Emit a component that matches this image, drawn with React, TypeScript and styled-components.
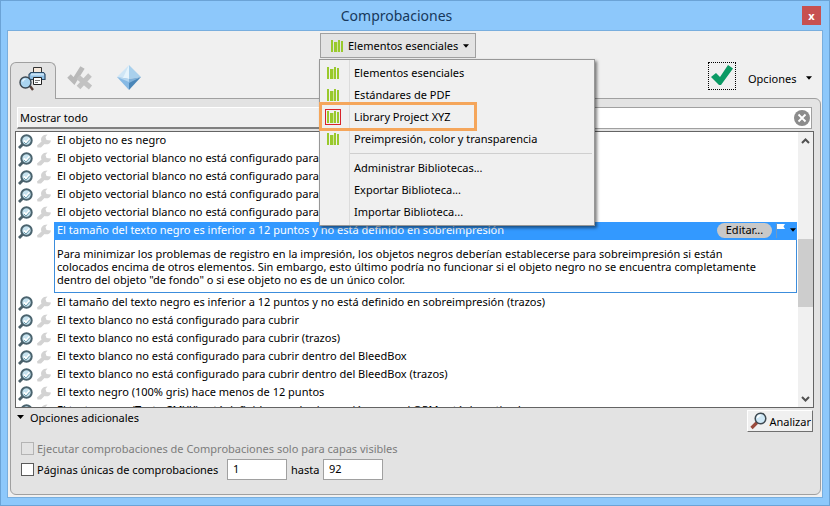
import React from "react";
import styled, { createGlobalStyle, css } from "styled-components";

const GlobalStyle = createGlobalStyle`
  *, *::before, *::after { box-sizing: border-box; }
  html, body { margin: 0; height: 100%; }
  body, button, input, select {
    font-family: "Noto Sans", "Open Sans", "Segoe UI", sans-serif;
    font-size: 11px;
    color: #000;
  }
  svg { flex: none; }
`;

const Window = styled.div`
  display: flex;
  flex-direction: column;
  height: 100vh;
  padding: 0 6px 7px;
  background: #8dc8fb;
  border: 1px solid #6ba3d6;
`;

const TitleBar = styled.header`
  display: flex;
  align-items: center;
  flex: none;
  height: 29px;
`;

const Title = styled.h1`
  flex: 1;
  margin: 0;
  padding-right: 16px;
  font-size: 14px;
  font-weight: 400;
  line-height: 28px;
  text-align: center;
  color: #17385c;
`;

const CloseButton = styled.button`
  width: 19px;
  height: 19px;
  margin-right: 2px;
  padding: 0;
  border: 0;
  background: #c75050;
  color: #fff;
  font-size: 11px;
  font-weight: 700;
  line-height: 16px;
`;

const Client = styled.main`
  display: flex;
  flex-direction: column;
  flex: 1;
  min-height: 0;
  padding: 2px 1px 2px 2px;
  background: #f0f0f0;
  border: 1px solid #78aede;
`;

const LibraryBar = styled.div`
  display: flex;
  justify-content: center;
  flex: none;
  height: 29px;
  padding-right: 35px;
`;

const LibraryPicker = styled.div`
  position: relative;
`;

const LibraryButton = styled.button`
  display: flex;
  align-items: center;
  gap: 5px;
  width: 156px;
  height: 25px;
  padding: 0 8px 0 10px;
  border: 1px solid #a0a0a0;
  background: #e3e3e3;
  white-space: nowrap;
`;

const Menu = styled.div`
  position: absolute;
  z-index: 5;
  top: 26px;
  left: -1px;
  width: 276px;
  padding: 2px 0;
  border: 1px solid #979797;
  background: linear-gradient(90deg, #f0f0f0 29px, #dcdcdc 29px, #dcdcdc 30px, #f0f0f0 30px);
  box-shadow: 2px 2px 3px rgba(0, 0, 0, 0.5);
`;

const MenuItem = styled.button`
  display: grid;
  grid-template-columns: 26px 1fr;
  align-items: center;
  width: 100%;
  height: 22px;
  padding: 0 0 0 8px;
  border: 0;
  background: none;
  line-height: 16px;
  text-align: left;
  white-space: nowrap;
`;

const MenuIcon = styled.span<{ $marked?: boolean }>`
  display: flex;
  width: 16px;
  height: 16px;
  margin-left: -3px;
  align-items: center;
  justify-content: center;
  border: 1px solid ${(p) => (p.$marked ? "#d8232a" : "transparent")};
`;

const MenuDivider = styled.hr`
  height: 1px;
  margin: 3px 2px 3px 30px;
  border: 0;
  background: #cfcfcf;
`;

const Callout = styled.div`
  position: absolute;
  top: 42px;
  left: -1px;
  width: 158px;
  height: 29px;
  border: 3px solid #f5a65b;
  pointer-events: none;
`;

const TabBar = styled.nav`
  display: flex;
  align-items: flex-start;
  flex: none;
  height: 36px;
`;

const Tab = styled.button<{ $active?: boolean }>`
  display: flex;
  align-items: center;
  justify-content: center;
  width: ${(p) => (p.$active ? 46 : 49)}px;
  height: 37px;
  padding: 0 2px 6px 0;
  border: 0;
  background: none;
  ${(p) =>
    p.$active &&
    css`
      position: relative;
      z-index: 1;
      border: 1px solid #a0a0a0;
      border-bottom: 0;
      border-radius: 6px 6px 0 0;
      background: #e3e3e3;
    `}
`;

const Spacer = styled.span`
  flex: 1;
`;

const CheckButton = styled.button`
  display: flex;
  align-items: center;
  justify-content: center;
  width: 28px;
  height: 28px;
  padding: 0 0 2px;
  border: 1px dotted #000;
  background: #f0f0f0;
`;

const OptionsButton = styled.button`
  display: flex;
  align-items: center;
  justify-content: space-between;
  width: 64px;
  height: 32px;
  margin: 0 9px 0 12px;
  padding: 0;
  border: 0;
  background: none;
`;

const Panel = styled.section`
  display: flex;
  flex-direction: column;
  flex: 1;
  min-height: 0;
  padding: 8px 6px 0 4px;
  border: 1px solid #a0a0a0;
  border-radius: 0 6px 6px 6px;
  background: #e3e3e3;
`;

const FilterBar = styled.div`
  display: grid;
  grid-template-columns: 1fr 1fr;
  flex: none;
  height: 22px;
  margin: 0 2px 2px;
`;

const FilterSelect = styled.select`
  appearance: none;
  padding: 0 2px;
  border: 1px solid #fff;
  border-bottom: 2px solid #808080;
  border-radius: 0;
  background: #f0f0f0;
`;

const SearchField = styled.div`
  display: flex;
  align-items: center;
  padding-right: 1px;
  border: 1px solid #a0a0a0;
  background: #fff;
`;

const SearchInput = styled.input`
  flex: 1;
  min-width: 0;
  height: 18px;
  border: 0;
  outline: 0;
  background: none;
`;

const ClearButton = styled.button`
  display: flex;
  padding: 0;
  border: 0;
  background: none;
`;

const ListBox = styled.div`
  display: flex;
  flex: 1;
  min-height: 0;
  border: 1px solid #646464;
  background: #fff;
`;

const CheckList = styled.ul`
  flex: 1;
  min-width: 0;
  margin: 0;
  padding: 0 1px 0 2px;
  overflow: hidden;
  list-style: none;
`;

const CheckRow = styled.li`
  display: grid;
  grid-template-columns: 18px 18px 1fr;
  align-items: center;
`;

const RowLabel = styled.div<{ $selected?: boolean }>`
  display: flex;
  align-items: center;
  height: 18px;
  padding: 0 0 2px 3px;
  line-height: 16px;
  white-space: nowrap;
  background: ${(p) => (p.$selected ? "#3399ff" : "transparent")};
  color: ${(p) => (p.$selected ? "#fff" : "#000")};
`;

const Description = styled.p`
  grid-column: 3;
  margin: 0 0 1px;
  padding: 7px 38px 6px 2px;
  border: 1px solid #3c8ddc;
  border-top: 0;
  line-height: 13px;
`;

const EditButton = styled.button`
  width: 55px;
  height: 15px;
  margin-right: 4px;
  padding: 0;
  border: 0;
  border-radius: 8px;
  background: #c8c8c8;
  line-height: 14px;
`;

const FlagButton = styled.button`
  display: flex;
  align-items: center;
  gap: 4px;
  padding: 0 1px 0 0;
  border: 0;
  background: none;
`;

const ScrollBar = styled.div`
  display: flex;
  flex-direction: column;
  align-items: center;
  width: 15px;
  background: #f0f0f0;
`;

const ScrollButton = styled.button`
  display: flex;
  align-items: center;
  justify-content: center;
  width: 15px;
  height: 17px;
  padding: 0;
  border: 0;
  background: none;
`;

const ScrollTrack = styled.div`
  display: grid;
  grid-template-rows: 90fr 67fr 83fr;
  flex: 1;
  width: 100%;
`;

const ScrollThumb = styled.div`
  grid-row: 2;
  background: #cdcdcd;
`;

const Footer = styled.footer`
  display: flex;
  justify-content: space-between;
  align-items: flex-start;
  flex: none;
  padding: 0 1px 14px 2px;
`;

const OptionsGroup = styled.div`
  display: flex;
  flex-direction: column;
`;

const Disclosure = styled.button`
  display: flex;
  align-items: center;
  gap: 6px;
  height: 18px;
  margin-bottom: 12px;
  padding: 0;
  border: 0;
  background: none;
`;

const OptionLine = styled.div`
  display: flex;
  align-items: center;
  height: 21px;
  padding-left: 4px;
`;

const OptionLabel = styled.label<{ $disabled?: boolean }>`
  display: flex;
  align-items: center;
  gap: 3px;
  color: ${(p) => (p.$disabled ? "#7c7c7c" : "#000")};
`;

const PagesLabel = styled(OptionLabel)`
  width: 206px;
`;

const Checkbox = styled.input`
  appearance: none;
  width: 13px;
  height: 13px;
  margin: 0;
  border: 1px solid #5a5a5a;
  background: #fff;
  &:disabled {
    border-color: #b4b4b4;
    background: #e3e3e3;
  }
`;

const PageInput = styled.input`
  width: 60px;
  height: 21px;
  padding: 0 5px 2px;
  border: 1px solid #a0a0a0;
  background: #fff;
`;

const ToLabel = styled.label`
  width: 36px;
  padding-left: 4px;
`;

const AnalyzeButton = styled.button`
  display: flex;
  align-items: center;
  gap: 2px;
  height: 22px;
  margin-top: 2px;
  padding: 0 1px 0 2px;
  border: 1px solid;
  border-color: #fff #707070 #707070 #fff;
  background: #f0f0f0;
`;

const Caret = ({ size = 7 }: { size?: number }) => (
  <svg width={size} height="4" viewBox="0 0 7 4" aria-hidden="true">
    <path d="M0 0h7L3.500 4z" fill="#000" />
  </svg>
);

const BooksIcon = () => (
  <svg width="12" height="12" viewBox="0 0 12 12" aria-hidden="true">
    <g fill="#99c92c">
      <path d="M0 0h2v12H0zM3 2h3v10H3zM7 0h2v12H7zM10 1h2v11h-2z" />
    </g>
    <path d="M6 2h1v10H6z" fill="#cfe59a" />
  </svg>
);

const PrinterIcon = () => (
  <svg width="27" height="25" viewBox="0 0 27 25" aria-hidden="true">
    <path d="M14.500 1.500h8v6h-8z" fill="#f6e9dc" stroke="#333" />
    <path d="M12 6.500h12.500l1.500 2v5h-16v-5z" fill="#8fc0e6" stroke="#2b4a66" strokeWidth="1.200" />
    <path d="M12 7.500h13v2H12z" fill="#c8e3f5" />
    <path d="M14.500 11.500h8v7h-8z" fill="#fff" stroke="#222" />
    <path d="M16 14.500h5M16 16.500h3" stroke="#777" />
    <path d="M11 20l3 4" stroke="#5a4038" strokeWidth="2.400" />
    <circle cx="6.500" cy="16.500" r="5.500" fill="#a9d4f0" stroke="#3a4650" strokeWidth="1.400" />
    <path d="M3.500 15.500a3.500 3.500 0 0 1 3-2.500" fill="none" stroke="#e6f5ff" strokeWidth="1.500" />
  </svg>
);

const FixIcon = () => (
  <svg width="26" height="25" viewBox="0 0 26 25" aria-hidden="true">
    <path d="M2 11l5 5L15.500 2.500" fill="none" stroke="#b9b9b9" strokeWidth="5" />
    <path d="M11 12l12.500 10.500M23 10L11.500 22.500" fill="none" stroke="#c2c2c2" strokeWidth="5" />
  </svg>
);

const DiamondIcon = () => (
  <svg width="24" height="25" viewBox="0 0 24 25" aria-hidden="true">
    <path d="M12 0L0 12l12 2z" fill="#cfe6f6" />
    <path d="M12 0l12 12-12 2z" fill="#a9d0ec" />
    <path d="M12 0L6 13l6 1z" fill="#e6f4fc" />
    <path d="M0 12l12 2v11z" fill="#86b9e4" />
    <path d="M0 12l12 2v3z" fill="#b5d6f0" />
    <path d="M24 12l-12 4v9z" fill="#4a86b8" />
    <path d="M24 12l-12 2v4z" fill="#7fb0d8" />
  </svg>
);

const GreenCheckIcon = () => (
  <svg width="24" height="22" viewBox="0 0 24 22" aria-hidden="true">
    <path d="M1 13l5-4 4 4 8-12 5 3.500L11 21H9z" fill="#0a9a64" />
  </svg>
);

const ClearIcon = () => (
  <svg width="16" height="16" viewBox="0 0 16 16" aria-hidden="true">
    <circle cx="8" cy="8" r="8" fill="#8c8c8c" />
    <path d="M4.500 4.500l7 7M11.500 4.500l-7 7" stroke="#fff" strokeWidth="1.800" />
  </svg>
);

const InspectIcon = () => (
  <svg width="16" height="16" viewBox="0 0 16 16" aria-hidden="true">
    <path d="M1 15l4-4" stroke="#4a5f68" strokeWidth="2.800" />
    <circle cx="8.500" cy="7.500" r="5.200" fill="#c6e2ee" stroke="#4a636e" strokeWidth="2" />
    <path d="M5.800 7.300l2.200 2.200 3.500-4" fill="none" stroke="#fff" strokeWidth="1.800" />
    <path d="M6 9l2 2 4-4.500" fill="none" stroke="#6f9aa8" strokeWidth="1" />
  </svg>
);

const WrenchIcon = () => (
  <svg width="16" height="16" viewBox="0 0 16 16" aria-hidden="true">
    <path
      d="M1 12.500L5.500 8.500C4 5 6.500 1.500 11.500 1.500L9.500 4l1 3 4.500.5c-.5 3.500-4 4.500-6.500 3.500L5 14.500H1.500z"
      fill="#d3d3d3"
    />
  </svg>
);

const FlagIcon = () => (
  <svg width="10" height="15" viewBox="0 0 10 15" aria-hidden="true">
    <path d="M0 0h1v15H0z" fill="#6f9ac4" />
    <path d="M1 1h8L7.500 3.500 9 6H1z" fill="#fff" />
  </svg>
);

const Chevron = ({ down }: { down?: boolean }) => (
  <svg width="9" height="6" viewBox="0 0 9 6" aria-hidden="true">
    <path d={down ? "M1 1l3.500 3.500L8 1" : "M1 5l3.500-3.500L8 5"} fill="none" stroke="#505050" strokeWidth="2" />
  </svg>
);

const LensIcon = () => (
  <svg width="17" height="18" viewBox="0 0 17 18" aria-hidden="true">
    <path d="M1.500 16L7 10.500" stroke="#9a4a3c" strokeWidth="3.200" />
    <circle cx="10.500" cy="6.500" r="5.300" fill="#cfe8f6" stroke="#3f4a52" strokeWidth="1.500" />
    <path d="M7.500 6a3 3 0 0 1 3-2.500" fill="none" stroke="#fff" strokeWidth="1.500" />
  </svg>
);

const libraries = ["Elementos esenciales", "Estándares de PDF", "Library Project XYZ", "Preimpresión, color y transparencia"];
const actions = ["Administrar Bibliotecas...", "Exportar Biblioteca...", "Importar Biblioteca..."];

type Check = { label: string; detail?: string };

const checks: Check[] = [
  { label: "El objeto no es negro" },
  { label: "El objeto vectorial blanco no está configurado para cubrir" },
  { label: "El objeto vectorial blanco no está configurado para cubrir" },
  { label: "El objeto vectorial blanco no está configurado para cubrir" },
  { label: "El objeto vectorial blanco no está configurado para cubrir" },
  {
    label: "El tamaño del texto negro es inferior a 12 puntos y no está definido en sobreimpresión",
    detail:
      'Para minimizar los problemas de registro en la impresión, los objetos negros deberían establecerse para sobreimpresión si están colocados encima de otros elementos. Sin embargo, esto último podría no funcionar si el objeto negro no se encuentra completamente dentro del objeto "de fondo" o si ese objeto no es de un único color.',
  },
  { label: "El tamaño del texto negro es inferior a 12 puntos y no está definido en sobreimpresión (trazos)" },
  { label: "El texto blanco no está configurado para cubrir" },
  { label: "El texto blanco no está configurado para cubrir (trazos)" },
  { label: "El texto blanco no está configurado para cubrir dentro del BleedBox" },
  { label: "El texto blanco no está configurado para cubrir dentro del BleedBox (trazos)" },
  { label: "El texto negro (100% gris) hace menos de 12 puntos" },
  { label: "El texto negro (Texto CMYK) está definido en sobreimpresión, pero el OPM está desactivado" },
];

export default function App() {
  return (
    <>
      <GlobalStyle />
      <Window>
        <TitleBar>
          <Title>Comprobaciones</Title>
          <CloseButton aria-label="Cerrar">x</CloseButton>
        </TitleBar>
        <Client>
          <LibraryBar>
            <LibraryPicker>
              <LibraryButton aria-haspopup="menu" aria-expanded="true">
                <BooksIcon />
                Elementos esenciales
                <Caret size={6} />
              </LibraryButton>
              <Menu role="menu">
                {libraries.map((name) => (
                  <MenuItem key={name} role="menuitem">
                    <MenuIcon $marked={name === "Library Project XYZ"}>
                      <BooksIcon />
                    </MenuIcon>
                    {name}
                  </MenuItem>
                ))}
                <MenuDivider />
                {actions.map((name) => (
                  <MenuItem key={name} role="menuitem">
                    <span />
                    {name}
                  </MenuItem>
                ))}
                <Callout />
              </Menu>
            </LibraryPicker>
          </LibraryBar>
          <TabBar>
            <Tab $active aria-label="Comprobaciones">
              <PrinterIcon />
            </Tab>
            <Tab aria-label="Correcciones">
              <FixIcon />
            </Tab>
            <Tab aria-label="Perfiles">
              <DiamondIcon />
            </Tab>
            <Spacer />
            <CheckButton aria-label="Verificar">
              <GreenCheckIcon />
            </CheckButton>
            <OptionsButton>
              Opciones
              <Caret size={6} />
            </OptionsButton>
          </TabBar>
          <Panel>
            <FilterBar>
              <FilterSelect aria-label="Filtro">
                <option>Mostrar todo</option>
              </FilterSelect>
              <SearchField>
                <SearchInput type="text" aria-label="Buscar" />
                <ClearButton aria-label="Borrar">
                  <ClearIcon />
                </ClearButton>
              </SearchField>
            </FilterBar>
            <ListBox>
              <CheckList>
                {checks.map((check, i) => (
                  <CheckRow key={i}>
                    <InspectIcon />
                    <WrenchIcon />
                    <RowLabel $selected={!!check.detail}>
                      {check.label}
                      {check.detail && (
                        <>
                          <Spacer />
                          <EditButton>Editar...</EditButton>
                          <FlagButton aria-label="Marcar">
                            <FlagIcon />
                            <Caret size={6} />
                          </FlagButton>
                        </>
                      )}
                    </RowLabel>
                    {check.detail && <Description>{check.detail}</Description>}
                  </CheckRow>
                ))}
              </CheckList>
              <ScrollBar>
                <ScrollButton aria-label="Subir">
                  <Chevron />
                </ScrollButton>
                <ScrollTrack>
                  <ScrollThumb />
                </ScrollTrack>
                <ScrollButton aria-label="Bajar">
                  <Chevron down />
                </ScrollButton>
              </ScrollBar>
            </ListBox>
            <Footer>
              <OptionsGroup>
                <Disclosure aria-expanded="true">
                  <Caret />
                  Opciones adicionales
                </Disclosure>
                <OptionLine>
                  <OptionLabel $disabled>
                    <Checkbox type="checkbox" disabled />
                    Ejecutar comprobaciones de Comprobaciones solo para capas visibles
                  </OptionLabel>
                </OptionLine>
                <OptionLine>
                  <PagesLabel>
                    <Checkbox type="checkbox" />
                    Páginas únicas de comprobaciones
                  </PagesLabel>
                  <PageInput type="text" defaultValue="1" aria-label="Desde la página" />
                  <ToLabel htmlFor="last-page">hasta</ToLabel>
                  <PageInput id="last-page" type="text" defaultValue="92" />
                </OptionLine>
              </OptionsGroup>
              <AnalyzeButton>
                <LensIcon />
                Analizar
              </AnalyzeButton>
            </Footer>
          </Panel>
        </Client>
      </Window>
    </>
  );
}
